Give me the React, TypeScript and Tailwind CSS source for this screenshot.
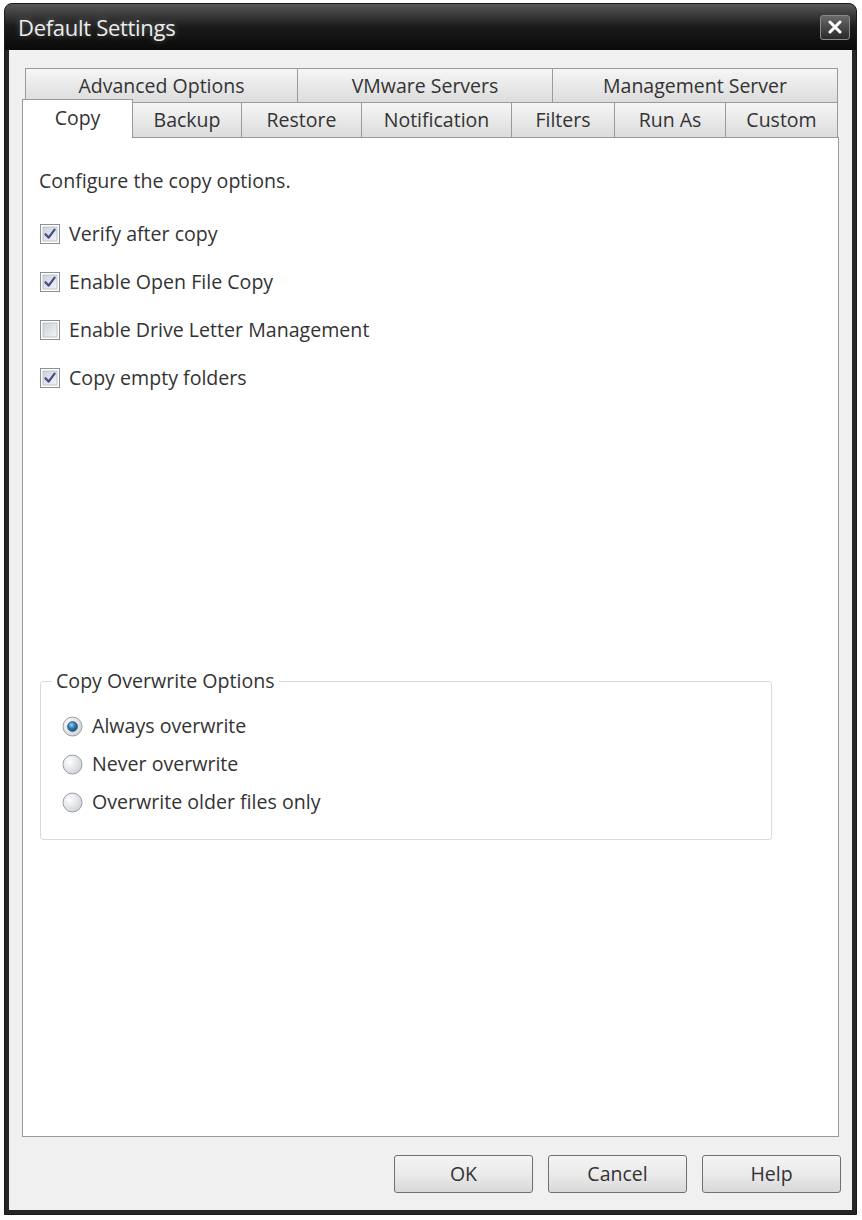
import React from "react";

const font = { fontFamily: '"Open Sans", "Noto Sans", sans-serif' };

const topTabs = [
  { label: "Advanced Options", w: "w-[272px]" },
  { label: "VMware Servers", w: "w-[255px]" },
  { label: "Management Server", w: "w-[286px]" },
];

const bottomTabs = [
  { label: "Backup", w: "w-[109px]" },
  { label: "Restore", w: "w-[120px]" },
  { label: "Notification", w: "w-[150px]" },
  { label: "Filters", w: "w-[103px]" },
  { label: "Run As", w: "w-[111px]" },
  { label: "Custom", w: "w-[112px]" },
];

const options = [
  { label: "Verify after copy", checked: true },
  { label: "Enable Open File Copy", checked: true },
  { label: "Enable Drive Letter Management", checked: false },
  { label: "Copy empty folders", checked: true },
];

const radios = [
  { label: "Always overwrite", selected: true },
  { label: "Never overwrite", selected: false },
  { label: "Overwrite older files only", selected: false },
];

function CheckBox({ checked }: { checked: boolean }) {
  return (
    <svg width="20" height="20" viewBox="0 0 20 20" className="shrink-0">
      <defs>
        <linearGradient id="cbg" x1="0" y1="0" x2="1" y2="1">
          <stop offset="0" stopColor="#cbd0d8" />
          <stop offset="1" stopColor="#f4f5f7" />
        </linearGradient>
      </defs>
      <rect x="0.5" y="0.5" width="19" height="19" fill="#fff" stroke="#8e8f8f" />
      <rect x="3" y="3" width="14" height="14" fill="url(#cbg)" stroke="#b5b9c2" strokeWidth="0.8" />
      {checked && (
        <path d="M5.5 10.2 L8.6 13.6 L14.6 5.6" fill="none" stroke="#3c4f8c" strokeWidth="2.2" strokeLinecap="round" strokeLinejoin="round" />
      )}
    </svg>
  );
}

function Radio({ selected }: { selected: boolean }) {
  return (
    <svg width="21" height="21" viewBox="0 0 21 21" className="shrink-0">
      <defs>
        <radialGradient id="rbg" cx="0.35" cy="0.35" r="0.8">
          <stop offset="0" stopColor="#ffffff" />
          <stop offset="1" stopColor="#c9ccd2" />
        </radialGradient>
        <radialGradient id="rdot" cx="0.4" cy="0.35" r="0.7">
          <stop offset="0" stopColor="#9fd3ee" />
          <stop offset="0.5" stopColor="#2a7aae" />
          <stop offset="1" stopColor="#154d76" />
        </radialGradient>
      </defs>
      <circle cx="10.5" cy="10.5" r="9.5" fill="url(#rbg)" stroke="#9a9ea6" />
      {selected && <circle cx="10.5" cy="10.5" r="5" fill="url(#rdot)" stroke="#1e4f73" strokeWidth="0.6" />}
    </svg>
  );
}

export default function App() {
  return (
    <div className="w-[862px] h-[1220px] bg-white pt-[3px] pl-[4px] text-[#333]" style={font}>
      <div className="w-[853px] h-[1212px] rounded-t-[8px] bg-[#262626] border border-[#1a1a1a] flex flex-col px-[4px] pb-[4px]">
        {/* title bar */}
        <div className="h-[46px] flex items-center justify-between rounded-t-[7px] bg-gradient-to-b from-[#5a5a5a] via-[#1a1a1a] to-[#0a0a0a] -mx-[4px] pl-[13px] pr-[6px]">
          <span className="text-[22px] text-[#ececec] tracking-[-0.3px]" style={{ textShadow: "0 0 6px rgba(255,255,255,0.35)" }}>
            Default Settings
          </span>
          <div className="w-[30px] h-[25px] rounded-[3px] border border-[#8a8a8a] bg-gradient-to-b from-[#6a6a6a] to-[#2a2a2a] flex items-center justify-center">
            <svg width="14" height="14" viewBox="0 0 14 14">
              <path d="M2 2 L12 12 M12 2 L2 12" stroke="#fff" strokeWidth="3" strokeLinecap="round" />
            </svg>
          </div>
        </div>

        {/* client area */}
        <div className="flex-1 bg-[#f0f0f0] px-[13px] pt-[18px] flex flex-col">
          {/* tab rows */}
          <div className="flex pl-[3px] h-[34px]">
            {topTabs.map((t) => (
              <div
                key={t.label}
                className={`${t.w} h-full border border-r-0 last:border-r border-b-0 border-[#9a9a9a] bg-gradient-to-b from-[#f6f6f6] to-[#dcdcdc] flex items-center justify-center text-[19.5px]`}
              >
                {t.label}
              </div>
            ))}
          </div>
          <div className="flex items-end h-[35px]">
            <div className="w-[111px] h-[39px] -mb-[1px] relative z-10 bg-white border border-b-0 border-[#9a9a9a] flex items-start justify-center pt-[3px] text-[19.5px]">
              Copy
            </div>
            {bottomTabs.map((t) => (
              <div
                key={t.label}
                className={`${t.w} h-full border-t border-r border-[#9a9a9a] bg-gradient-to-b from-[#f6f6f6] to-[#dcdcdc] flex items-center justify-center text-[19.5px]`}
              >
                {t.label}
              </div>
            ))}
          </div>

          {/* panel */}
          <div className="h-[1000px] bg-white border border-[#9a9a9a] pl-[16px] pt-[31px] flex flex-col">
            <div className="h-[24px] flex items-center text-[19.6px]">Configure the copy options.</div>
            <div className="mt-[29px] flex flex-col gap-[24px]">
              {options.map((o) => (
                <div key={o.label} className="h-[24px] flex items-center gap-[9px] pl-[1px] text-[19.6px]">
                  <CheckBox checked={o.checked} />
                  <span>{o.label}</span>
                </div>
              ))}
            </div>

            <fieldset className="mt-[279px] w-[732px] ml-[1px] border border-[#d5dbe0] rounded-[3px] pl-[11px] pb-[25px]">
              <legend className="px-[4px] h-[24px] leading-[24px] text-[19.6px]">Copy Overwrite Options</legend>
              <div className="mt-[21px] flex flex-col gap-[14px] pl-[10px]">
                {radios.map((r) => (
                  <div key={r.label} className="h-[24px] flex items-center gap-[9px] text-[19.6px]">
                    <Radio selected={r.selected} />
                    <span>{r.label}</span>
                  </div>
                ))}
              </div>
            </fieldset>
          </div>

          {/* buttons */}
          <div className="mt-[18px] flex justify-end gap-[15px] -mr-[2px]">
            {["OK", "Cancel", "Help"].map((b) => (
              <button
                key={b}
                className="w-[139px] h-[38px] rounded-[3px] border border-[#707070] bg-gradient-to-b from-[#f4f4f4] via-[#ebebeb] to-[#d8d8d8] text-[19.5px] text-[#333]"
              >
                {b}
              </button>
            ))}
          </div>
        </div>
      </div>
    </div>
  );
}
